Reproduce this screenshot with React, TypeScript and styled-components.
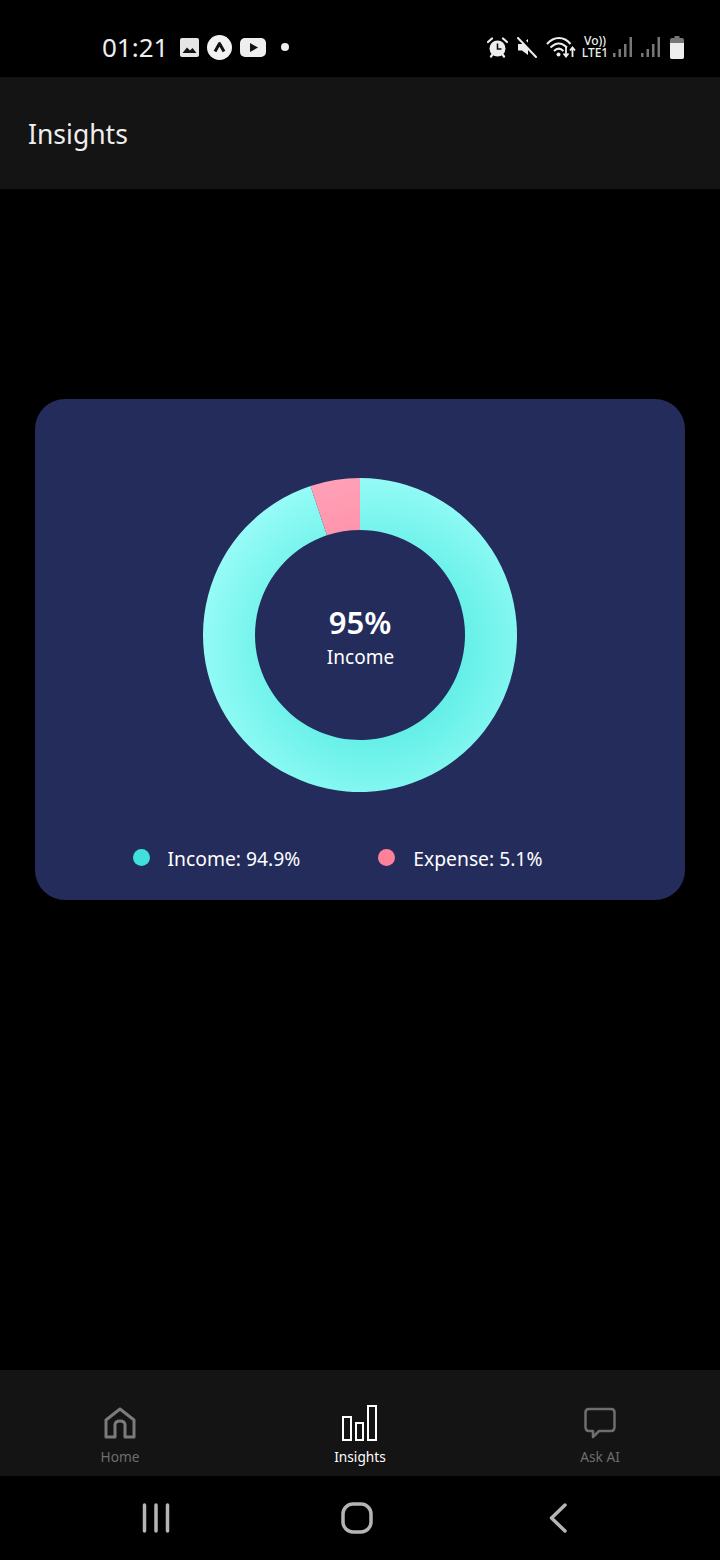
import React from 'react';
import styled, { createGlobalStyle } from 'styled-components';

const FONT = '"Noto Sans", "Open Sans", sans-serif';

const polar = (r: number, deg: number) => {
  const a = (deg * Math.PI) / 180;
  return `${157 + r * Math.sin(a)} ${157 - r * Math.cos(a)}`;
};

const wedge = (from: number, to: number) => {
  const large = to - from > 180 ? 1 : 0;
  return `M${polar(157, from)} A157 157 0 ${large} 1 ${polar(157, to)} L${polar(105, to)} A105 105 0 ${large} 0 ${polar(105, from)} Z`;
};

const Insights: React.FC = () => (
  <Page>
    <GlobalStyle />
    <StatusBar>
      <StatusLeft>
        <Clock>01:21</Clock>
        <svg width="19" height="19" viewBox="0 0 19 19">
          <rect x="0" y="0" width="19" height="19" rx="2" fill="#e6e6e6" />
          <path d="M2.5 15 L7 9.500 L10 12.500 L12.500 10 L16.500 15 Z" fill="#111" />
        </svg>
        <svg width="25" height="25" viewBox="0 0 25 25">
          <circle cx="12.5" cy="12.5" r="12.5" fill="#f2f2f2" />
          <path d="M8 16.500 L12.500 8.500 L17 16.500" fill="none" stroke="#111" strokeWidth="3" strokeLinejoin="round" />
        </svg>
        <svg width="26" height="19" viewBox="0 0 26 19">
          <rect x="0" y="0" width="26" height="19" rx="5" fill="#eee" />
          <path d="M10 5 L18 9.500 L10 14 Z" fill="#111" />
        </svg>
        <NotifDot />
      </StatusLeft>
      <StatusRight>
        <svg width="21" height="21" viewBox="0 0 21 21">
          <circle cx="10.500" cy="11.500" r="8" fill="#eee" />
          <path d="M10.500 6.500 V12 H14.500" fill="none" stroke="#111" strokeWidth="1.600" />
          <path d="M1 5 L5 1.500 M20 5 L16 1.500 M4 19.500 L5.500 17.500 M17 19.500 L15.500 17.500" stroke="#eee" strokeWidth="2.200" strokeLinecap="round" />
        </svg>
        <svg width="20" height="21" viewBox="0 0 20 21">
          <path d="M1 7 H5 L11 2 V18 L5 13.500 H1 Z" fill="#eee" />
          <path d="M3 0 L20.500 19" stroke="#000" strokeWidth="4" />
          <path d="M1 1 L19 20" stroke="#eee" strokeWidth="2" strokeLinecap="round" />
        </svg>
        <svg width="30" height="23" viewBox="0 0 30 23">
          <path d="M1 8 C8 0 18 0 24.500 8 M4.500 11.500 C10 6 15.500 6 21 11.500 M8 15 C11 12 14.500 12 17.500 15" fill="none" stroke="#eee" strokeWidth="2" />
          <circle cx="12.500" cy="18.500" r="2" fill="#eee" />
          <path d="M20 11 V20 M17.500 17.500 L20 20.500 L22.500 17.500 M26.500 21 V12 M24 14.500 L26.500 11.500 L29 14.500" fill="none" stroke="#eee" strokeWidth="1.800" />
        </svg>
        <Volte>
          <VolteLine>Vo))</VolteLine>
          <VolteLine>LTE1</VolteLine>
        </Volte>
        <SignalBars />
        <SignalBars />
        <svg width="14" height="23" viewBox="0 0 14 23">
          <path d="M4.500 0 H9.500 V2 H12 Q14 2 14 4 V21 Q14 23 12 23 H2 Q0 23 0 21 V4 Q0 2 2 2 H4.500 Z" fill="#777" />
          <path d="M0 7 H14 V21 Q14 23 12 23 H2 Q0 23 0 21 Z" fill="#eee" />
        </svg>
      </StatusRight>
    </StatusBar>

    <Header>
      <Title>Insights</Title>
    </Header>

    <Main>
      <Card>
        <ChartWrap>
          <svg width="314" height="314" viewBox="0 0 314 314">
            <defs>
              <radialGradient id="incomeFill" gradientUnits="userSpaceOnUse" cx="172" cy="172" r="190">
                <stop offset="0" stopColor="#40e0d8" />
                <stop offset="0.55" stopColor="#6df2ea" />
                <stop offset="1" stopColor="#9efdf9" />
              </radialGradient>
              <radialGradient id="expenseFill" gradientUnits="userSpaceOnUse" cx="172" cy="172" r="190">
                <stop offset="0.5" stopColor="#ff8fa8" />
                <stop offset="1" stopColor="#ffa4b9" />
              </radialGradient>
            </defs>
            <path d={wedge(0, 341.64)} fill="url(#incomeFill)" />
            <path d={wedge(341.64, 360)} fill="url(#expenseFill)" />
          </svg>
          <ChartCenter>
            <Percent>95%</Percent>
            <CenterLabel>Income</CenterLabel>
          </ChartCenter>
        </ChartWrap>
        <Legend>
          <LegendItem>
            <Dot $color="#40e0dc" />
            <span>Income: 94.9%</span>
          </LegendItem>
          <LegendItem>
            <Dot $color="#ff8099" />
            <span>Expense: 5.1%</span>
          </LegendItem>
        </Legend>
      </Card>
    </Main>

    <TabBar>
      <Tab>
        <TabIcon>
          <svg width="32" height="32" viewBox="0 0 32 32" fill="none" stroke="#7b7b7b" strokeWidth="3" strokeLinejoin="round">
            <path d="M2 30 V13 L16 2 L30 13 V30 H21 V18 Q21 14 16 14 Q11 14 11 18 V30 Z" />
          </svg>
        </TabIcon>
        <TabLabel>Home</TabLabel>
      </Tab>
      <Tab>
        <TabIcon>
          <svg width="36" height="36" viewBox="0 0 36 36" fill="none" stroke="#fff" strokeWidth="2">
            <rect x="1" y="12" width="8" height="23" />
            <rect x="14" y="18" width="7" height="17" />
            <rect x="26" y="1" width="8" height="34" />
          </svg>
        </TabIcon>
        <TabLabel $active>Insights</TabLabel>
      </Tab>
      <Tab>
        <TabIcon>
          <svg width="32" height="32" viewBox="0 0 32 32" fill="none" stroke="#6e6e6e" strokeWidth="2.500" strokeLinejoin="round">
            <path d="M5 2 H27 Q30.500 2 30.500 5.500 V20 Q30.500 24 27 24 H15 L9 30 V24 H5 Q1.500 24 1.500 20 V5.500 Q1.500 2 5 2 Z" />
          </svg>
        </TabIcon>
        <TabLabel>Ask AI</TabLabel>
      </Tab>
    </TabBar>

    <SystemNav>
      <svg width="28" height="30" viewBox="0 0 28 30" stroke="#b5b5b5" strokeWidth="3.500" strokeLinecap="round">
        <path d="M2.500 2 V28 M14 2 V28 M25.500 2 V28" />
      </svg>
      <svg width="32" height="32" viewBox="0 0 32 32" fill="none" stroke="#b5b5b5" strokeWidth="3.500">
        <rect x="2" y="2" width="28" height="28" rx="10" />
      </svg>
      <svg width="18" height="30" viewBox="0 0 18 30" fill="none" stroke="#b5b5b5" strokeWidth="3.500" strokeLinecap="round" strokeLinejoin="round">
        <path d="M16 2 L2.500 15 L16 28" />
      </svg>
    </SystemNav>
  </Page>
);

const SignalBars: React.FC = () => (
  <svg width="19" height="21" viewBox="0 0 19 21" fill="#777">
    <rect x="0" y="16" width="2.500" height="4" />
    <rect x="5.500" y="12" width="2.500" height="8" />
    <rect x="11" y="7" width="2.500" height="13" />
    <rect x="16.500" y="0" width="2.500" height="20" />
  </svg>
);

const GlobalStyle = createGlobalStyle`
  html, body {
    margin: 0;
    padding: 0;
    background: #000;
  }
`;

const Page = styled.div`
  width: 720px;
  height: 1560px;
  display: flex;
  flex-direction: column;
  background: #000;
  color: #fff;
  font-family: ${FONT};
  overflow: hidden;
`;

const StatusBar = styled.div`
  height: 77px;
  flex: none;
  display: flex;
  align-items: center;
  justify-content: space-between;
  padding: 17px 36px 0 102px;
  box-sizing: border-box;
`;

const StatusLeft = styled.div`
  display: flex;
  align-items: center;
  gap: 8px;
`;

const StatusRight = styled.div`
  display: grid;
  grid-template-columns: 30px 29px 36px 31px 28px 29px 14px;
  align-items: center;
`;

const Clock = styled.span`
  font-size: 26px;
  line-height: 30px;
  color: #eee;
  width: 70px;
`;

const NotifDot = styled.span`
  width: 8px;
  height: 8px;
  margin-left: 7px;
  border-radius: 50%;
  background: #eee;
`;

const Volte = styled.div`
  display: flex;
  flex-direction: column;
  align-items: center;
  color: #eee;
  width: 26px;
`;

const VolteLine = styled.span`
  font-size: 12px;
  font-weight: 500;
  line-height: 12px;
  white-space: nowrap;
`;

const Header = styled.div`
  height: 112px;
  flex: none;
  box-sizing: border-box;
  display: flex;
  align-items: center;
  padding: 2px 0 0 28px;
  background: #141414;
`;

const Title = styled.h1`
  margin: 0;
  font-size: 26.500px;
  font-weight: 400;
  color: #eee;
`;

const Main = styled.div`
  flex: 1;
  padding: 210px 35px 0;
`;

const Card = styled.div`
  height: 501px;
  box-sizing: border-box;
  padding-top: 79px;
  display: flex;
  flex-direction: column;
  align-items: center;
  background: #242c5c;
  border-radius: 30px;
`;

const ChartWrap = styled.div`
  position: relative;
  width: 314px;
  height: 314px;

  svg {
    display: block;
  }
`;

const ChartCenter = styled.div`
  position: absolute;
  inset: 0;
  padding-top: 6px;
  display: flex;
  flex-direction: column;
  align-items: center;
  justify-content: center;
`;

const Percent = styled.div`
  font-size: 31px;
  font-weight: 600;
  line-height: 36px;
`;

const CenterLabel = styled.div`
  margin-top: 2px;
  padding-left: 1px;
  font-size: 19px;
  line-height: 30px;
`;

const Legend = styled.div`
  display: flex;
  gap: 78px;
  margin-top: 51px;
  margin-left: -45px;
`;

const LegendItem = styled.div`
  display: flex;
  align-items: center;
  gap: 18px;
  font-size: 19.300px;
  line-height: 32px;
`;

const Dot = styled.span<{ $color: string }>`
  width: 17px;
  height: 17px;
  margin-top: -3px;
  border-radius: 50%;
  background: ${props => props.$color};
`;

const TabBar = styled.div`
  height: 106px;
  flex: none;
  display: grid;
  grid-template-columns: repeat(3, 1fr);
  background: #141414;
`;

const Tab = styled.div`
  display: flex;
  flex-direction: column;
  align-items: center;
  padding-top: 35px;
`;

const TabIcon = styled.div`
  height: 36px;
  display: flex;
  align-items: center;
  justify-content: center;
`;

const TabLabel = styled.span<{ $active?: boolean }>`
  margin-top: 6px;
  font-size: 13.700px;
  line-height: 20px;
  color: ${props => (props.$active ? '#fff' : '#6e6e6e')};
`;

const SystemNav = styled.div`
  height: 84px;
  flex: none;
  display: grid;
  grid-template-columns: repeat(3, 201px);
  justify-content: center;
  align-items: center;
  justify-items: center;
  padding-right: 6px;
`;

export default Insights;
